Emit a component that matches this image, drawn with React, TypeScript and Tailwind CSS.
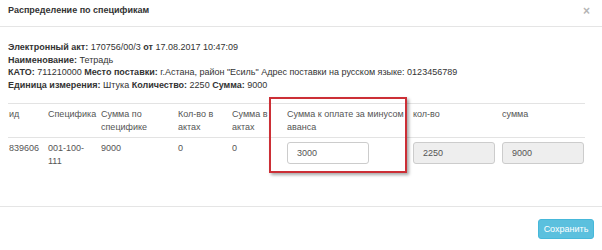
import React from 'react';

const headers = ['ид', 'Специфика', 'Сумма по специфике', 'Кол-во в актах', 'Сумма в актах'];

const App = () => {
  return (
    <div className="w-[602px] h-[250px] bg-white text-[#333] text-[9px] leading-[12.5px] overflow-hidden" style={{ fontFamily: '"Liberation Sans", Arial, sans-serif' }}>
      {/* header */}
      <div className="h-[27px] flex items-center justify-between pl-[8px] pr-[12px] border-b border-[#e5e5e5]">
        <span className="font-bold text-[9px] -mt-[6px]">Распределение по спецификам</span>
        <span className="text-[#b5b5b5] font-bold text-[12px] -mt-[4px]">×</span>
      </div>

      {/* body */}
      <div className="h-[179px] pl-[8px] pt-[14px]">
        <div>
          <b>Электронный акт:</b> 170756/00/3 <b>от</b> 17.08.2017 10:47:09
        </div>
        <div>
          <b>Наименование:</b> Тетрадь
        </div>
        <div>
          <b>КАТО:</b> 711210000 <b>Место поставки:</b> г.Астана, район "Есиль" Адрес поставки на русском языке: 0123456789
        </div>
        <div>
          <b>Единица измерения:</b> Штука <b>Количество:</b> 2250 <b>Сумма:</b> 9000
        </div>

        <div className="relative mt-[12px] w-[577px]">
          <div className="grid grid-cols-[39px_53px_77px_54px_39px_136px_89px_90px] border-t border-[#e3e3e3]">
            {headers.map((h) => (
              <div key={h} className="pl-[1px] pr-[2px] pt-[4px] pb-[4px] text-[#555] border-b border-[#e3e3e3]">
                {h}
              </div>
            ))}
            <div className="pl-[17px] pt-[4px] pb-[4px] text-[#555] border-b border-[#e3e3e3]">Сумма к оплате за минусом аванса</div>
            <div className="pl-[7px] pt-[4px] text-[#555] border-b border-[#e3e3e3]">кол-во</div>
            <div className="pl-[7px] pt-[4px] text-[#555] border-b border-[#e3e3e3]">сумма</div>

            <div className="pl-[1px] pt-[4px] text-[#555]">839606</div>
            <div className="pl-[1px] pr-[6px] pt-[4px] text-[#555]">001-100-111</div>
            <div className="pl-[1px] pt-[4px] text-[#555]">9000</div>
            <div className="pl-[1px] pt-[4px] text-[#555]">0</div>
            <div className="pl-[1px] pt-[4px] text-[#555]">0</div>
            <div className="pl-[17px] pt-[4px] pb-[9px]">
              <div className="w-[82px] h-[22px] border border-[#ccc] rounded-[3px] bg-white pl-[9px] flex items-center text-[#555]">3000</div>
            </div>
            <div className="pl-[7px] pt-[4px]">
              <div className="w-[82px] h-[22px] border border-[#ccc] rounded-[3px] bg-[#eee] pl-[9px] flex items-center text-[#555]">2250</div>
            </div>
            <div className="pl-[7px] pt-[4px]">
              <div className="w-[82px] h-[22px] border border-[#ccc] rounded-[3px] bg-[#eee] pl-[9px] flex items-center text-[#555]">9000</div>
            </div>
          </div>

          {/* highlight box */}
          <div className="absolute left-[261px] top-[-6px] w-[138px] h-[76px] border-2 border-[#cc2f36] shadow-[2px_2px_3px_rgba(0,0,0,0.35)]" />
        </div>
      </div>

      {/* footer */}
      <div className="border-t border-[#e5e5e5] h-[44px] flex items-start justify-end pr-[8px] pt-[12px]">
        <button className="w-[56px] h-[20px] rounded-[3px] bg-[#5bc0de] border border-[#46b8da] text-white text-[9px]">Сохранить</button>
      </div>
    </div>
  );
};

export default App;
